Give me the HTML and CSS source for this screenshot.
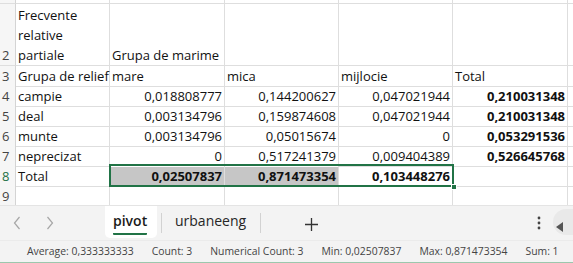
FILE: index.html
```html
<!DOCTYPE html>
<html lang="ro">
<head>
    <meta charset="UTF-8">
    <title>pivot</title>
    <link rel="stylesheet" href="styles.css">
</head>
<body>

<div class="sheet">
    <div class="row r1">
        <div class="hd"></div><div class="c"></div><div class="c"></div><div class="c"></div><div class="c"></div><div class="c"></div><div class="c last"></div>
    </div>
    <div class="row r2">
        <div class="hd">2</div>
        <div class="c">Frecvente<br>relative<br>partiale</div>
        <div class="c">Grupa de marime</div>
        <div class="c"></div><div class="c"></div><div class="c"></div><div class="c last"></div>
    </div>
    <div class="row">
        <div class="hd">3</div>
        <div class="c">Grupa de relief</div>
        <div class="c">mare</div>
        <div class="c">mica</div>
        <div class="c">mijlocie</div>
        <div class="c">Total</div>
        <div class="c last"></div>
    </div>
    <div class="row">
        <div class="hd">4</div>
        <div class="c">campie</div>
        <div class="c num">0,018808777</div>
        <div class="c num">0,144200627</div>
        <div class="c num">0,047021944</div>
        <div class="c num b">0,210031348</div>
        <div class="c last"></div>
    </div>
    <div class="row">
        <div class="hd">5</div>
        <div class="c">deal</div>
        <div class="c num">0,003134796</div>
        <div class="c num">0,159874608</div>
        <div class="c num">0,047021944</div>
        <div class="c num b">0,210031348</div>
        <div class="c last"></div>
    </div>
    <div class="row">
        <div class="hd">6</div>
        <div class="c">munte</div>
        <div class="c num">0,003134796</div>
        <div class="c num">0,05015674</div>
        <div class="c num">0</div>
        <div class="c num b">0,053291536</div>
        <div class="c last"></div>
    </div>
    <div class="row">
        <div class="hd">7</div>
        <div class="c">neprecizat</div>
        <div class="c num">0</div>
        <div class="c num">0,517241379</div>
        <div class="c num">0,009404389</div>
        <div class="c num b">0,526645768</div>
        <div class="c last"></div>
    </div>
    <div class="row">
        <div class="hd active">8</div>
        <div class="c">Total</div>
        <div class="c num b grey">0,02507837</div>
        <div class="c num b grey">0,871473354</div>
        <div class="c num b">0,103448276</div>
        <div class="c"></div>
        <div class="c last"></div>
    </div>
    <div class="row">
        <div class="hd">9</div>
        <div class="c"></div><div class="c"></div><div class="c"></div><div class="c"></div><div class="c"></div><div class="c last"></div>
    </div>

    <!-- selection B8:D8 -->
    <div class="selection"><span class="handle"></span></div>
</div>

<div class="tabbar">
    <div class="nav">
        <svg width="8" height="14" viewBox="0 0 8 14"><path d="M6.5 1 L1.5 7 L6.5 13" fill="none" stroke="#a6a6a6" stroke-width="1.2"/></svg>
        <svg width="8" height="14" viewBox="0 0 8 14"><path d="M1.5 1 L6.5 7 L1.5 13" fill="none" stroke="#a6a6a6" stroke-width="1.2"/></svg>
    </div>
    <div class="tab current"><span>pivot</span></div>
    <div class="sep"></div>
    <div class="tab">urbaneeng</div>
    <div class="sep"></div>
    <div class="add">
        <svg width="13" height="13" viewBox="0 0 13 13"><path d="M6.5 0 V13 M0 6.5 H13" stroke="#333" stroke-width="1.3"/></svg>
    </div>
    <div class="spacer"></div>
    <div class="more">
        <svg width="4" height="14" viewBox="0 0 4 14"><circle cx="2" cy="2" r="1.4" fill="#444"/><circle cx="2" cy="7" r="1.4" fill="#444"/><circle cx="2" cy="12" r="1.4" fill="#444"/></svg>
    </div>
    <div class="scroll">
        <svg width="8" height="10" viewBox="0 0 8 10"><path d="M7 0 V10 L0 5 Z" fill="#555"/></svg>
    </div>
</div>

<div class="status">
    <span>Average: 0,333333333</span>
    <span>Count: 3</span>
    <span>Numerical Count: 3</span>
    <span>Min: 0,02507837</span>
    <span>Max: 0,871473354</span>
    <span>Sum: 1</span>
</div>

</body>
</html>
```

FILE: styles.css
```css
* {
    box-sizing: border-box;
}

body {
    margin: 0;
    width: 573px;
    height: 263px;
    overflow: hidden;
    background-color: white;
    font-family: "Open Sans", "Liberation Sans", sans-serif;
}

.sheet {
    position: relative;
    height: 205px;
    overflow: hidden;
    font-size: 13px;
    color: #111;
}

.row {
    display: grid;
    grid-template-columns: 16px 94px 115px 114px 114px 115px 1fr;
    height: 20px;
}

.r1 {
    height: 4px;
}

.r2 {
    height: 62px;
}

.hd,
.c {
    border-right: 1px solid #dedede;
    border-bottom: 1px solid #dedede;
    line-height: 20px;
    white-space: nowrap;
    overflow: visible;
    display: flex;
    flex-direction: column;
    justify-content: flex-end;
    padding: 0 2px;
}

.hd {
    background-color: #f6f6f6;
    color: #444;
    padding: 0 0 0 2px;
    border-right-color: #d4d4d4;
}

.hd.active {
    color: #1e7145;
}

.num {
    text-align: right;
}

.b {
    font-weight: bold;
}

.grey {
    background-color: #c6c6c6;
    box-shadow: inset 0 1px 0 white, inset 0 -1px 0 white;
}

.c.last {
    border-right: none;
}

.selection {
    position: absolute;
    left: 109px;
    top: 164px;
    width: 345px;
    height: 23px;
    border: 2px solid #217346;
    pointer-events: none;
}

.handle {
    position: absolute;
    right: -5px;
    bottom: -5px;
    width: 6px;
    height: 6px;
    background-color: #217346;
    border: 1px solid white;
}

.tabbar {
    display: flex;
    align-items: flex-start;
    height: 35px;
    background-color: #f3f3f3;
    border-top: 1px solid #e4e4e4;
    color: #262626;
    font-size: 14px;
}

.nav {
    width: 105px;
    display: flex;
    gap: 25px;
    padding: 10px 0 0 13px;
}

.tab {
    height: 32px;
    line-height: 30px;
    padding: 0 10px 0 9px;
}

.tab.current {
    width: 52px;
    padding: 0 8px;
    background-color: white;
    border-radius: 0 0 5px 5px;
    font-weight: 600;
    color: #1a1a1a;
}

.tab.current span {
    display: inline-block;
    line-height: 24px;
    margin-top: 2px;
    border-bottom: 2px solid #217346;
    border-radius: 1px;
}

.sep {
    width: 1px;
    height: 20px;
    margin: 7px 4px 0;
    background-color: #d2d2d2;
}

.add {
    padding: 10px 0 0 40px;
}

.spacer {
    flex: 1;
}

.more {
    padding: 9px 12px 0 0;
}

.scroll {
    width: 20px;
    height: 26px;
    margin-top: 3px;
    padding: 8px 0 0 3px;
    background-color: #e9e9e9;
    border-radius: 13px 0 0 13px;
}

.status {
    display: flex;
    gap: 18px;
    height: 23px;
    padding: 3px 0 0 27px;
    background-color: #f3f3f3;
    border-top: 1px solid #ebebeb;
    border-bottom: 1px solid #9cc7ad;
    font-size: 10.4px;
    color: #444;
}
```
